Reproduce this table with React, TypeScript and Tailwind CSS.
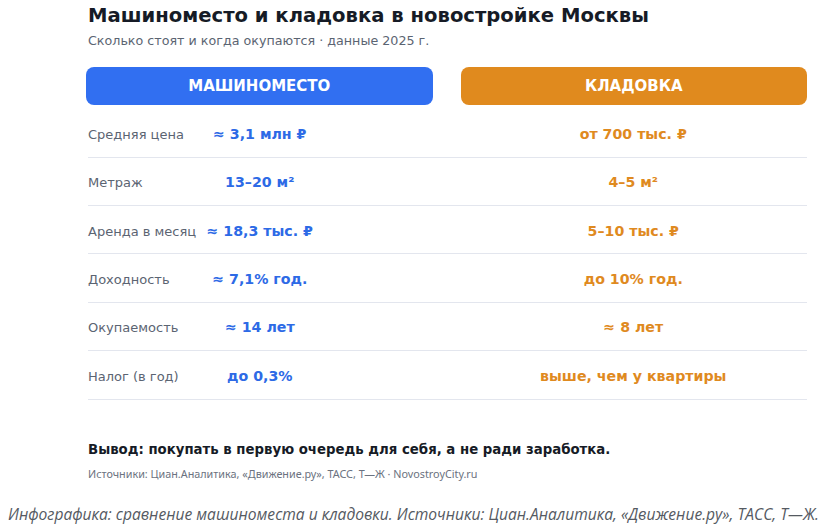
const rows = [
  { label: 'Средняя цена', car: '≈ 3,1 млн ₽', box: 'от 700 тыс. ₽' },
  { label: 'Метраж', car: '13–20 м²', box: '4–5 м²' },
  { label: 'Аренда в месяц', car: '≈ 18,3 тыс. ₽', box: '5–10 тыс. ₽' },
  { label: 'Доходность', car: '≈ 7,1% год.', box: 'до 10% год.' },
  { label: 'Окупаемость', car: '≈ 14 лет', box: '≈ 8 лет' },
  { label: 'Налог (в год)', car: 'до 0,3%', box: 'выше, чем у квартиры' },
]

export default function App() {
  return (
    <div className="w-[830px] h-[527px] bg-white font-['DejaVu_Sans',sans-serif] relative overflow-hidden">
      <div className="w-[721px] ml-[86px] pt-[4px]">
        {/* Заголовок */}
        <h1 className="ml-[2px] text-[19.6px] leading-[24px] font-bold text-[#161b26]">
          Машиноместо и кладовка в новостройке Москвы
        </h1>
        <p className="ml-[2px] mt-[4.5px] text-[12.7px] leading-[16px] text-[#5b6472]">
          Сколько стоят и когда окупаются · данные 2025 г.
        </p>

        {/* Шапка колонок */}
        <div className="mt-[18.5px] grid grid-cols-2 gap-[28px]">
          <div className="h-[38px] rounded-lg bg-[#316ff1] flex items-center justify-center text-white text-[15px] font-bold">
            МАШИНОМЕСТО
          </div>
          <div className="h-[38px] rounded-lg bg-[#e08a1e] flex items-center justify-center text-white text-[15px] font-bold">
            КЛАДОВКА
          </div>
        </div>

        {/* Строки */}
        <div className="mt-[4.3px] ml-[2px]">
          {rows.map((r) => (
            <div key={r.label} className="h-[48.4px] pt-[3px] border-b border-[#e3e6ee] grid grid-cols-[343.5px_1fr] gap-[28px] items-center">
              <div className="grid items-center">
                <span className="[grid-area:1/1] text-[13px] text-[#5b6472]">{r.label}</span>
                <span className="[grid-area:1/1] justify-self-center text-[14.2px] font-bold text-[#2d6ae6]">{r.car}</span>
              </div>
              <div className="text-center text-[14.2px] font-bold text-[#df8a1f]">{r.box}</div>
            </div>
          ))}
        </div>

        {/* Вывод */}
        <p className="ml-[2px] mt-[42px] text-[13.3px] leading-[16px] font-bold text-[#161b26]">
          Вывод: покупать в первую очередь для себя, а не ради заработка.
        </p>
        <p className="ml-[2px] mt-[9px] text-[10.8px] leading-[14px] text-[#6b7280] font-['Noto_Sans',sans-serif]">
          Источники: Циан.Аналитика, «Движение.ру», ТАСС, Т—Ж · NovostroyCity.ru
        </p>
      </div>

      {/* Подпись */}
      <p className="absolute left-[8px] top-[503px] text-[15.6px] leading-[22px] italic whitespace-nowrap text-[#555a62] font-['Open_Sans',sans-serif]">
        Инфографика: сравнение машиноместа и кладовки. Источники: Циан.Аналитика, «Движение.ру», ТАСС, Т—Ж.
      </p>
    </div>
  )
}
